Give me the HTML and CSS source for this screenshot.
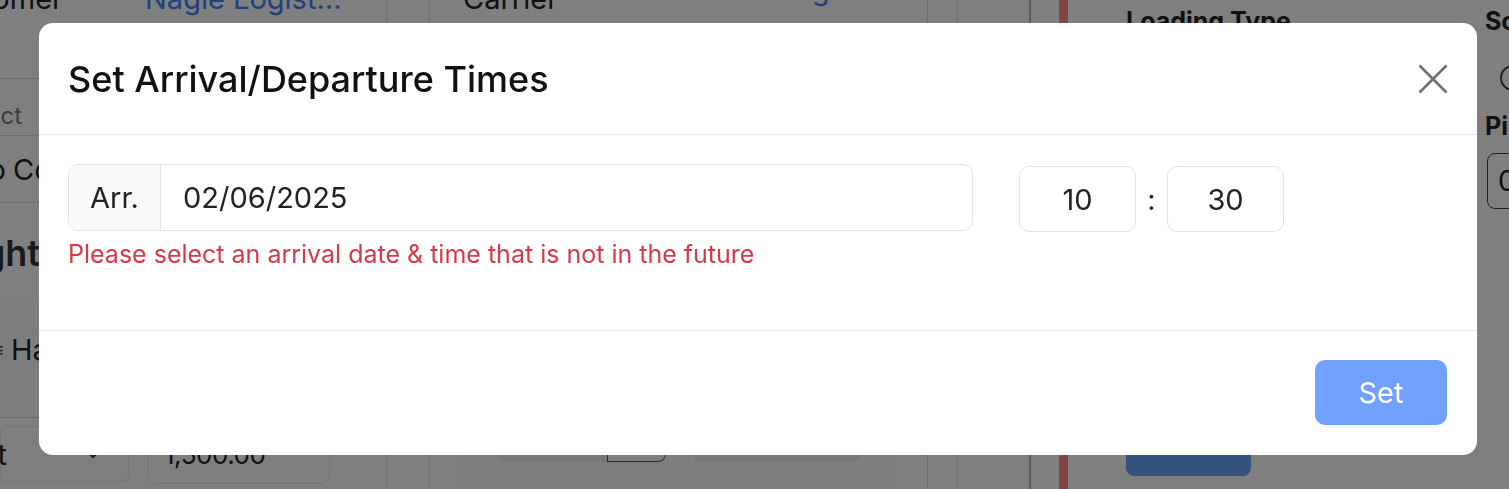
FILE: index.html
```html
<!DOCTYPE html>
<html lang="en">
<head>
<meta charset="utf-8">
<title>Set Arrival/Departure Times</title>
<link rel="stylesheet" href="styles.css">
</head>
<body>
<div class="page">
  <section class="col col-left">
    <div class="l-row l-r1">
      <div class="clip-end w63"><span class="bg-text">Customer</span></div>
      <span class="link l-link">Nagie Logistics</span>
    </div>
    <div class="l-row l-r2"><div class="clip-end w22"><span class="placeholder">Select</span></div></div>
    <div class="l-row l-r3"><div class="clip-end w6"><span class="bg-text">Demo</span></div><span class="bg-text co">Co Ltd</span></div>
    <div class="l-row l-r4"><div class="clip-end w40"><span class="heading">Freight</span></div></div>
    <div class="l-row l-r5"><span class="mark">≡</span><span class="bg-text">Handling</span></div>
    <div class="l-row l-r6">
      <div class="bg-select"><div class="clip-end w6"><span class="bg-text">Unit</span></div><svg width="16" height="10" viewBox="0 0 16 10"><path d="M1 1l7 7 7-7" fill="none" stroke="#333" stroke-width="2.2"/></svg></div>
      <div class="bg-input">1,500.00</div>
    </div>
  </section>
  <section class="col col-gap"></section>
  <section class="col col-mid">
    <div class="m-top">
      <span class="bg-text m-lbl">Carrier</span>
      <span class="link m-link">Trucking</span>
    </div>
    <div class="m-bottom">
      <div class="m-box m-box1"><div class="m-append"></div></div>
      <div class="m-box m-box2"></div>
    </div>
  </section>
  <section class="col col-n1"></section>
  <section class="col col-n2"></section>
  <section class="col col-n3"><div class="red-bar"></div></section>
  <section class="col col-right">
    <div class="r-main">
      <div class="r-title">Loading Type</div>
      <div class="r-btn"></div>
    </div>
    <div class="r-side">
      <div class="r-so">Sort</div>
      <div class="r-radio"></div>
      <div class="r-pi">Pieces</div>
      <div class="r-input">0</div>
    </div>
  </section>
</div>

<div class="backdrop">
  <div class="modal" role="dialog">
    <header class="modal-header">
      <h1 class="modal-title">Set Arrival/Departure Times</h1>
      <button class="close-btn" aria-label="Close">
        <svg width="30" height="30" viewBox="0 0 30 30"><path d="M1.5 1.5L28.5 28.5M28.5 1.5L1.5 28.5" stroke="#6f6f6f" stroke-width="2.6" fill="none"/></svg>
      </button>
    </header>
    <div class="modal-body">
      <div class="field-row">
        <div class="input-group">
          <span class="addon">Arr.</span>
          <span class="date-value">02/06/2025</span>
        </div>
        <div class="time-group">
          <span class="time-box">10</span>
          <span class="colon">:</span>
          <span class="time-box">30</span>
        </div>
      </div>
      <div class="error">Please select an arrival date &amp; time that is not in the future</div>
    </div>
    <footer class="modal-footer">
      <button class="set-btn" disabled>Set</button>
    </footer>
  </div>
</div>
</body>
</html>
```

FILE: styles.css
```css
* { box-sizing: border-box; }
html, body { margin: 0; padding: 0; }
body {
  width: 1509px;
  height: 489px;
  overflow: hidden;
  font-family: Inter, "Noto Sans", "Liberation Sans", sans-serif;
  background: #fff;
  color: #333;
}

/* ---------- background page ---------- */
.page {
  display: flex;
  height: 489px;
  overflow: hidden;
}
.col { height: 100%; flex: none; }
.col-left { width: 386px; display: flex; flex-direction: column; overflow: hidden; }
.col-gap { width: 44px; border-left: 1px solid #dcdcdc; border-right: 1px solid #dcdcdc; }
.col-mid { width: 497px; display: flex; flex-direction: column; overflow: hidden; }
.col-n1 { width: 30px; border-left: 1px solid #dcdcdc; }
.col-n2 { width: 72px; border-left: 1px solid #dcdcdc; }
.col-n3 { width: 65px; border-left: 2px solid #b4b4c8; padding-left: 28px; }
.red-bar { width: 9px; height: 100%; background: #ff8a8a; }
.col-right { flex: 1; display: flex; background: #fefefe; overflow: hidden; }

.clip-end { display: flex; justify-content: flex-end; flex: none; white-space: nowrap; }
.w63 { width: 63px; }
.w22 { width: 22px; }
.w6 { width: 6px; }
.w40 { width: 40px; }
.bg-text { font-size: 29px; color: #222; white-space: nowrap; }
.link { font-size: 29px; color: #3b82f6; white-space: nowrap; }
.placeholder { font-size: 24px; color: #7a7a7a; }
.heading { font-size: 36px; font-weight: 600; color: #333; }

.l-row { display: flex; align-items: center; border-bottom: 1px solid #dcdcdc; flex: none; }
.l-r1 { height: 79px; align-items: flex-start; }
.l-r1 .clip-end, .l-r1 .l-link { margin-top: -19px; }
.l-link { margin-left: 82px; width: 200px; overflow: hidden; text-overflow: ellipsis; }
.l-r2 { height: 57px; align-items: flex-end; padding-bottom: 5px; }
.l-r3 { height: 67px; }
.co { margin-left: 7px; }
.l-r4 { height: 99px; border-bottom: none; }
.l-r5 { height: 116px; background: #fbfbfb; padding-bottom: 20px; }
.mark { font-size: 20px; color: #555; margin-left: -8px; width: 19px; }
.l-r6 { flex: 1; border-bottom: none; align-items: flex-start; gap: 18px; padding-top: 8px; }
.bg-select {
  width: 129px; height: 56px; border: 1px solid #e8e8e8; border-radius: 8px;
  display: flex; align-items: center; justify-content: space-between;
  padding: 0 27px 0 0;
}
.bg-input {
  width: 183px; height: 58px; border: 1px solid #e8e8e8; border-radius: 8px;
  padding: 12px 16px 0; font-size: 26px; color: #222; letter-spacing: -0.5px;
}

.m-top { height: 380px; display: flex; align-items: flex-start; padding-left: 33px; }
.m-lbl { margin-top: -19px; width: 352px; flex: none; }
.m-link { margin-top: -28px; margin-left: -105px; }
.m-bottom {
  flex: 1; margin: 0 30px; background: #fdfdfd;
  display: flex; gap: 27px; padding-left: 37px; align-items: flex-start;
}
.m-box { height: 82px; border-radius: 0 0 8px 8px; background: #f0f0f0; }
.m-box1 { width: 169px; display: flex; justify-content: flex-end; }
.m-append { width: 59px; height: 82px; border: 1.5px solid #5a5a5a; border-top: none; border-radius: 0 0 8px 0; background: #fff; }
.m-box2 { width: 168px; }

.r-main { width: 376px; flex: none; padding-left: 32px; display: flex; flex-direction: column; }
.r-title { font-size: 25px; font-weight: 700; color: #222; margin-top: 6px; white-space: nowrap; }
.r-btn { width: 125px; height: 100px; margin-top: 340px; background: #6ca4ff; border-radius: 8px; }
.r-side { flex: 1; padding-left: 15px; display: flex; flex-direction: column; }
.r-so { font-size: 25px; font-weight: 700; color: #222; margin-top: 6px; white-space: nowrap; }
.r-radio { width: 26px; height: 26px; border: 2px solid #444; border-radius: 50%; margin: 29px 0 0 15px; }
.r-pi { font-size: 25px; font-weight: 700; color: #222; margin-top: 20px; white-space: nowrap; }
.r-input { height: 56px; margin: 12px -20px 0 2px; border: 1px solid #444; border-radius: 8px; padding: 10px 10px; font-size: 28px; color: #222; }

/* ---------- modal ---------- */
.backdrop {
  position: fixed;
  inset: 0;
  background: rgba(0, 0, 0, 0.5);
  display: flex;
  align-items: flex-start;
  padding: 23px 32px 0 39px;
}
.modal {
  flex: 1;
  height: 432px;
  background: #fff;
  border-radius: 14px;
  display: flex;
  flex-direction: column;
  overflow: hidden;
}
.modal-header {
  height: 112px;
  flex: none;
  display: flex;
  align-items: center;
  justify-content: space-between;
  padding: 0 29px;
  border-bottom: 1px solid #e9e9e9;
}
.modal-title {
  margin: 0;
  font-size: 36px;
  font-weight: 500;
  color: #111;
}
.close-btn {
  border: none; background: none; padding: 0; margin: 0;
  width: 30px; height: 30px; display: block; cursor: pointer;
}
.close-btn svg { display: block; }

.modal-body {
  height: 195px;
  flex: none;
  padding: 29px 29px 0;
}
.field-row { display: flex; align-items: flex-start; }
.input-group {
  width: 905px;
  height: 67px;
  display: flex;
  border: 1px solid #e4e4e4;
  border-radius: 10px;
  overflow: hidden;
  font-size: 29px;
  color: #222;
}
.addon {
  width: 92px;
  background: #f8f9fa;
  border-right: 1px solid #e4e4e4;
  display: flex;
  align-items: center;
  justify-content: center;
}
.date-value {
  display: flex;
  align-items: center;
  padding-left: 22px;
}
.time-group {
  display: flex;
  align-items: center;
  margin-left: 46px;
  margin-top: 2px;
}
.time-box {
  width: 117px;
  height: 66px;
  border: 1px solid #e4e4e4;
  border-radius: 10px;
  display: flex;
  align-items: center;
  justify-content: center;
  font-size: 29px;
  color: #222;
}
.colon { width: 31px; text-align: center; font-size: 29px; color: #222; }
.error {
  margin-top: 7px;
  font-size: 25px;
  line-height: 30px;
  color: #d63a48;
}
.modal-footer {
  height: 125px;
  flex: none;
  border-top: 1px solid #e9e9e9;
  display: flex;
  justify-content: flex-end;
  align-items: flex-start;
  padding: 29px 30px 0 0;
}
.set-btn {
  width: 132px;
  height: 65px;
  border: none;
  border-radius: 10px;
  background: #70a1ff;
  color: #fff;
  font-family: inherit;
  font-size: 29px;
}
```
